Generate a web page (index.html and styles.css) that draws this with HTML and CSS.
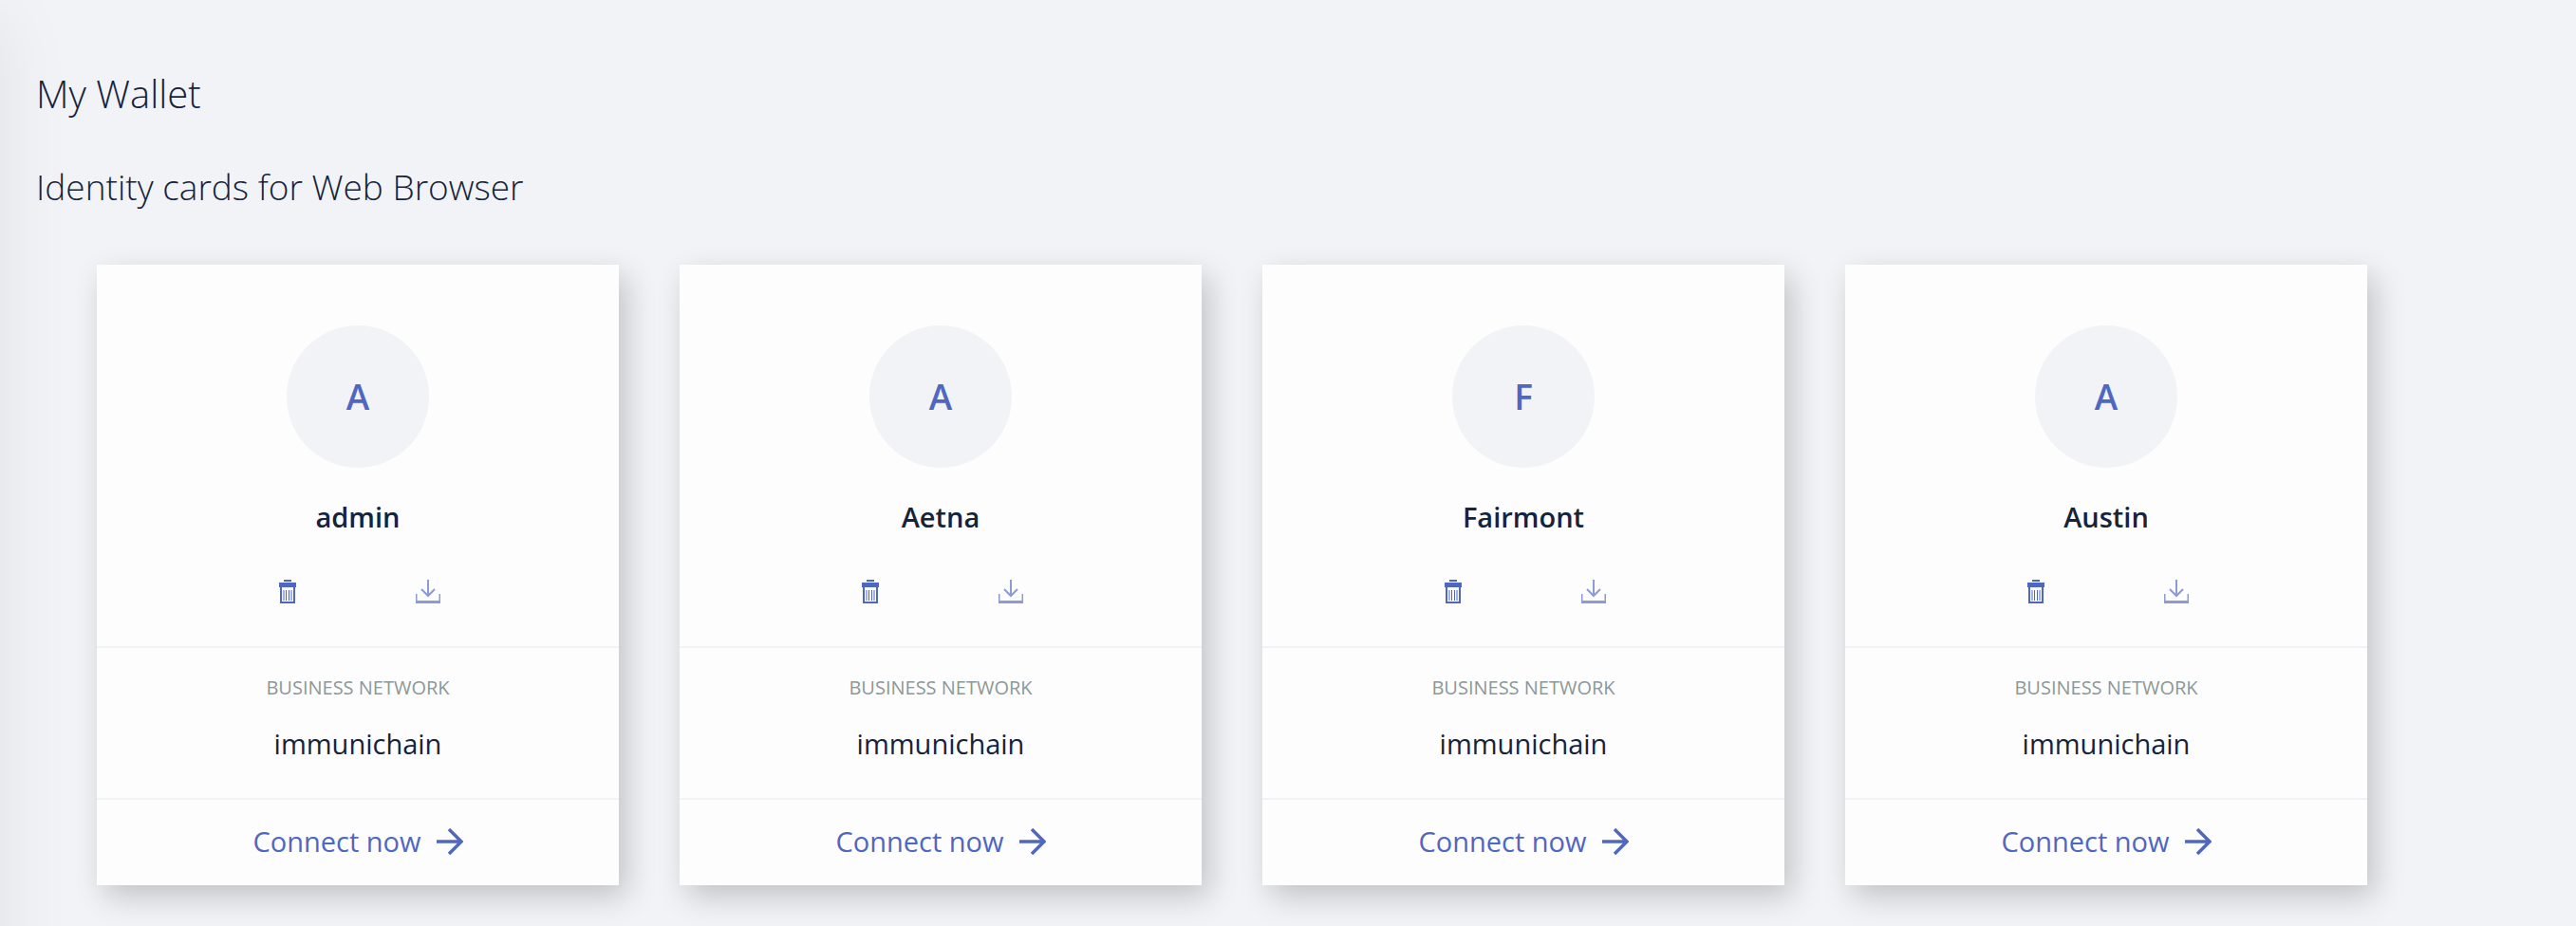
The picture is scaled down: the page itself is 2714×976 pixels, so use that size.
FILE: index.html
```html
<!DOCTYPE html>
<html lang="en">
<head>
<meta charset="utf-8">
<title>My Wallet</title>
<link rel="stylesheet" href="styles.css">
</head>
<body>
<svg class="sprite" aria-hidden="true">
  <symbol id="trash" viewBox="0 0 26 26">
    <path d="M9 1h8" stroke="currentColor" stroke-width="2"/>
    <path d="M4 3h18v5H4z" fill="currentColor"/>
    <path d="M6 7v17h14V7" fill="none" stroke="currentColor" stroke-width="2"/>
    <path d="M9 11v11M11.500 11v11M14.500 11v11M17 11v11" stroke="currentColor" stroke-width="1"/>
  </symbol>
  <symbol id="download" viewBox="0 0 26 26">
    <g fill="none" stroke="currentColor" opacity=".65">
      <path d="M13 0v17M6 10l7 7 7-7" stroke-width="2"/>
      <path d="M.75 15v9M25.250 15v9" stroke-width="1.500"/>
      <path d="M0 23.500h26" stroke-width="3"/>
    </g>
  </symbol>
  <symbol id="arrow" viewBox="0 0 28 28">
    <path d="M0 14h26M13 1l13 13-13 13" fill="none" stroke="currentColor" stroke-width="3.500"/>
  </symbol>
</svg>
<main class="wallet">
  <h1 class="title">My Wallet</h1>
  <h2 class="subtitle">Identity cards for Web Browser</h2>
  <div class="cards">
    <article class="card">
      <div class="identity">
        <div class="avatar">A</div>
        <h3 class="name">admin</h3>
        <div class="actions">
          <button class="icon-button" type="button" aria-label="Delete"><svg class="icon"><use href="#trash"/></svg></button>
          <button class="icon-button" type="button" aria-label="Export"><svg class="icon"><use href="#download"/></svg></button>
        </div>
      </div>
      <div class="network"><div class="label">BUSINESS NETWORK</div><div class="value">immunichain</div></div>
      <button class="connect" type="button">Connect now<svg class="arrow"><use href="#arrow"/></svg></button>
    </article>
    <article class="card">
      <div class="identity">
        <div class="avatar">A</div>
        <h3 class="name">Aetna</h3>
        <div class="actions">
          <button class="icon-button" type="button" aria-label="Delete"><svg class="icon"><use href="#trash"/></svg></button>
          <button class="icon-button" type="button" aria-label="Export"><svg class="icon"><use href="#download"/></svg></button>
        </div>
      </div>
      <div class="network"><div class="label">BUSINESS NETWORK</div><div class="value">immunichain</div></div>
      <button class="connect" type="button">Connect now<svg class="arrow"><use href="#arrow"/></svg></button>
    </article>
    <article class="card">
      <div class="identity">
        <div class="avatar">F</div>
        <h3 class="name">Fairmont</h3>
        <div class="actions">
          <button class="icon-button" type="button" aria-label="Delete"><svg class="icon"><use href="#trash"/></svg></button>
          <button class="icon-button" type="button" aria-label="Export"><svg class="icon"><use href="#download"/></svg></button>
        </div>
      </div>
      <div class="network"><div class="label">BUSINESS NETWORK</div><div class="value">immunichain</div></div>
      <button class="connect" type="button">Connect now<svg class="arrow"><use href="#arrow"/></svg></button>
    </article>
    <article class="card">
      <div class="identity">
        <div class="avatar">A</div>
        <h3 class="name">Austin</h3>
        <div class="actions">
          <button class="icon-button" type="button" aria-label="Delete"><svg class="icon"><use href="#trash"/></svg></button>
          <button class="icon-button" type="button" aria-label="Export"><svg class="icon"><use href="#download"/></svg></button>
        </div>
      </div>
      <div class="network"><div class="label">BUSINESS NETWORK</div><div class="value">immunichain</div></div>
      <button class="connect" type="button">Connect now<svg class="arrow"><use href="#arrow"/></svg></button>
    </article>
  </div>
</main>
</body>
</html>
```
FILE: styles.css
```css
* { box-sizing: border-box; }
body {
  margin: 0;
  background: #f1f3f7;
  color: #15233b;
  font-family: "Open Sans", sans-serif;
}
.sprite { display: none; }
.wallet {
  position: relative;
  min-height: 100vh;
  overflow: hidden;
  padding: 75px 38px 43px;
}
/* shadow cast by the panel left of the page */
.wallet::before {
  content: "";
  position: absolute;
  top: 20px;
  bottom: -80px;
  left: -80px;
  width: 80px;
  box-shadow: 0 0 80px rgba(0, 0, 0, 0.08);
}
h1, h2, h3 { margin: 0; }
.title {
  font-size: 40px;
  line-height: 48px;
  font-weight: 300;
}
.subtitle {
  margin: 52px 0 60px;
  font-size: 37px;
  line-height: 44px;
  font-weight: 300;
}
.cards {
  display: flex;
  flex-wrap: wrap;
  gap: 64px;
  padding: 0 64px;
}
.card {
  width: 550px;
  background: #fdfdfd;
  box-shadow: 8px 12px 30px rgba(0, 0, 0, 0.2);
  text-align: center;
}
.identity {
  display: flex;
  flex-direction: column;
  align-items: center;
  padding: 64px 0 44px;
  border-bottom: 2px solid #f1f3f7;
}
.avatar {
  width: 150px;
  height: 150px;
  border-radius: 50%;
  background: #f1f3f7;
  color: #4f67c1;
  font-size: 37px;
  line-height: 150px;
  font-weight: 600;
}
.name {
  margin: 34px 0 48px;
  font-size: 29px;
  line-height: 36px;
  font-weight: 600;
}
.actions { display: flex; gap: 122px; }
button {
  border: 0;
  padding: 0;
  background: none;
  color: #4f67c1;
  font-family: inherit;
  cursor: pointer;
}
.icon-button { width: 26px; height: 26px; }
.icon { display: block; width: 26px; height: 26px; }
.network {
  padding: 28px 0 39px;
  border-bottom: 2px solid #f1f3f7;
}
.label {
  margin-bottom: 27px;
  color: #8b9898;
  font-size: 20px;
  line-height: 28px;
}
.value { font-size: 29px; line-height: 36px; }
.connect {
  display: flex;
  align-items: center;
  justify-content: center;
  gap: 16px;
  width: 100%;
  padding: 26px 0 28px;
  font-size: 29px;
  line-height: 36px;
}
.arrow { width: 28px; height: 28px; }
```
